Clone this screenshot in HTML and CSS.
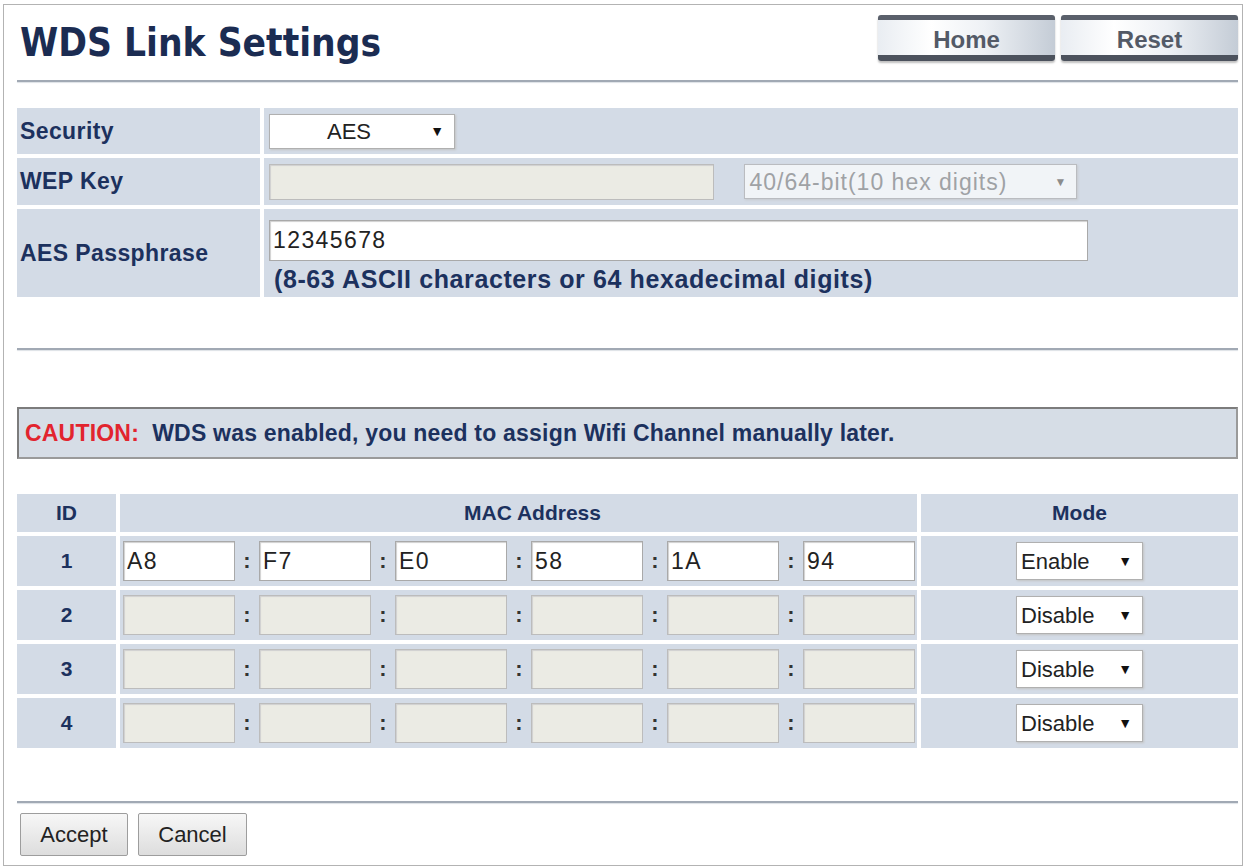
FILE: index.html
```html
<!DOCTYPE html>
<html lang="en">
    <head>
        <meta charset="UTF-8">
        <meta name="viewport" content="width=device-width, initial-scale=1.0">
        <link rel="stylesheet" href="styles.css">
        <title>WDS Link Settings</title>
    </head>
    <body>
        <div class="page">
            <div class="header">
                <h1 class="title">WDS Link Settings</h1>
                <div class="nav">
                    <a class="nav-btn" href="#">Home</a>
                    <a class="nav-btn" href="#">Reset</a>
                </div>
            </div>
            <div class="rule rule-top"></div>

            <table class="form-table security">
                <tr class="row-security">
                    <td class="label">Security</td>
                    <td class="value">
                        <span class="select-box">
                            <select class="sel sel-security"><option>AES</option></select>
                        </span>
                    </td>
                </tr>
                <tr class="row-wep">
                    <td class="label">WEP Key</td>
                    <td class="value">
                        <input class="txt txt-wep" type="text" disabled>
                        <span class="select-box select-off">
                            <select class="sel sel-keylen" disabled><option>40/64-bit(10 hex digits)</option></select>
                        </span>
                    </td>
                </tr>
                <tr class="row-aes">
                    <td class="label">AES Passphrase</td>
                    <td class="value value-aes">
                        <input class="txt txt-aes" type="text" value="12345678">
                        <div class="hint">(8-63 ASCII characters or 64 hexadecimal digits)</div>
                    </td>
                </tr>
            </table>

            <div class="rule rule-mid"></div>

            <div class="caution"><span class="caution-tag">CAUTION:</span>&nbsp; WDS was enabled, you need to assign Wifi Channel manually later.</div>

            <table class="form-table wds">
                <tr class="row-head">
                    <th class="col-id">ID</th>
                    <th class="col-mac">MAC Address</th>
                    <th class="col-mode">Mode</th>
                </tr>
                <tr class="row-mac">
                    <td class="col-id">1</td>
                    <td class="col-mac">
                        <div class="mac">
                            <input class="txt txt-mac" type="text" value="A8"><span class="sep">:</span>
                            <input class="txt txt-mac" type="text" value="F7"><span class="sep">:</span>
                            <input class="txt txt-mac" type="text" value="E0"><span class="sep">:</span>
                            <input class="txt txt-mac" type="text" value="58"><span class="sep">:</span>
                            <input class="txt txt-mac" type="text" value="1A"><span class="sep">:</span>
                            <input class="txt txt-mac" type="text" value="94">
                        </div>
                    </td>
                    <td class="col-mode">
                        <span class="select-box"><select class="sel sel-mode"><option>Enable</option></select></span>
                    </td>
                </tr>
                <tr class="row-mac">
                    <td class="col-id">2</td>
                    <td class="col-mac">
                        <div class="mac">
                            <input class="txt txt-mac" type="text" disabled><span class="sep">:</span>
                            <input class="txt txt-mac" type="text" disabled><span class="sep">:</span>
                            <input class="txt txt-mac" type="text" disabled><span class="sep">:</span>
                            <input class="txt txt-mac" type="text" disabled><span class="sep">:</span>
                            <input class="txt txt-mac" type="text" disabled><span class="sep">:</span>
                            <input class="txt txt-mac" type="text" disabled>
                        </div>
                    </td>
                    <td class="col-mode">
                        <span class="select-box"><select class="sel sel-mode"><option>Disable</option></select></span>
                    </td>
                </tr>
                <tr class="row-mac">
                    <td class="col-id">3</td>
                    <td class="col-mac">
                        <div class="mac">
                            <input class="txt txt-mac" type="text" disabled><span class="sep">:</span>
                            <input class="txt txt-mac" type="text" disabled><span class="sep">:</span>
                            <input class="txt txt-mac" type="text" disabled><span class="sep">:</span>
                            <input class="txt txt-mac" type="text" disabled><span class="sep">:</span>
                            <input class="txt txt-mac" type="text" disabled><span class="sep">:</span>
                            <input class="txt txt-mac" type="text" disabled>
                        </div>
                    </td>
                    <td class="col-mode">
                        <span class="select-box"><select class="sel sel-mode"><option>Disable</option></select></span>
                    </td>
                </tr>
                <tr class="row-mac">
                    <td class="col-id">4</td>
                    <td class="col-mac">
                        <div class="mac">
                            <input class="txt txt-mac" type="text" disabled><span class="sep">:</span>
                            <input class="txt txt-mac" type="text" disabled><span class="sep">:</span>
                            <input class="txt txt-mac" type="text" disabled><span class="sep">:</span>
                            <input class="txt txt-mac" type="text" disabled><span class="sep">:</span>
                            <input class="txt txt-mac" type="text" disabled><span class="sep">:</span>
                            <input class="txt txt-mac" type="text" disabled>
                        </div>
                    </td>
                    <td class="col-mode">
                        <span class="select-box"><select class="sel sel-mode"><option>Disable</option></select></span>
                    </td>
                </tr>
            </table>

            <div class="rule rule-bottom"></div>

            <div class="actions">
                <button class="btn btn-accept" type="button">Accept</button>
                <button class="btn btn-cancel" type="button">Cancel</button>
            </div>
        </div>
    </body>
</html>
```

FILE: styles.css
```css
body {
    margin: 0;
    background: #ffffff;
    font-family: "Liberation Sans", Arial, Helvetica, sans-serif;
}

.page {
    margin: 4px 5px 0 3px;
    border: 1px solid #b3b3b3;
    padding: 10px 4px 9px 13px;
}

/* header with title and the two tab buttons */
.header {
    display: flex;
    justify-content: space-between;
    align-items: flex-start;
}

.title {
    margin: 6px 0 0 3px;
    font-family: "DejaVu Sans Condensed", "DejaVu Sans", Verdana, sans-serif;
    font-size: 38.5px;
    line-height: 44px;
    font-weight: bold;
    color: #1b2c52;
}

.nav {
    display: flex;
    gap: 6px;
}

.nav-btn {
    display: block;
    width: 177px;
    height: 46px;
    box-sizing: border-box;
    border-top: 5px solid #5a606b;
    border-bottom: 6px solid #4c525d;
    border-radius: 3px;
    background: linear-gradient(90deg, #e9edf2 0%, #ffffff 30%, #eef1f5 60%, #c4ccd6 100%);
    box-shadow: 0 2px 2px rgba(0, 0, 0, 0.25);
    color: #535a67;
    font-size: 24px;
    font-weight: bold;
    line-height: 40px;
    text-align: center;
    text-decoration: none;
}

.rule {
    height: 2px;
    background: #a1a9b4;
    box-shadow: 0 1px 1px #dde1e6;
}

.rule-top {
    margin-top: 15px;
}

.rule-mid {
    margin-top: 47px;
}

.rule-bottom {
    margin-top: 49px;
}

/* settings tables */
.form-table {
    width: calc(100% + 8px);
    margin: 0 -4px;
    border-collapse: separate;
    border-spacing: 4px;
}

.form-table td,
.form-table th {
    background: #d3dbe6;
    padding: 0;
    color: #1c315e;
    font-weight: bold;
}

.security {
    margin-top: 22px;
}

.row-security {
    height: 46px;
}

.row-wep {
    height: 47px;
}

.row-aes {
    height: 88px;
}

.label {
    width: 240px;
    padding-left: 3px !important;
    font-size: 23px;
    letter-spacing: 0.4px;
    vertical-align: middle;
}

.value {
    padding-left: 5px !important;
    vertical-align: middle;
}

.value-aes {
    vertical-align: top;
    padding-top: 11px !important;
}

.hint {
    margin-top: 3px;
    padding-left: 5px;
    font-size: 25px;
    letter-spacing: 0.6px;
    line-height: 30px;
    font-weight: bold;
    color: #1c315e;
}

/* inputs and selects */
.txt {
    box-sizing: border-box;
    margin: 0;
    border: 1px solid #a9a9a9;
    padding: 0 3px;
    background: #ffffff;
    box-shadow: inset 1px 1px 1px #d0d0d0;
    font-family: "Liberation Sans", Arial, sans-serif;
    font-size: 23px;
    letter-spacing: 1.4px;
    color: #222222;
    vertical-align: middle;
}

.txt:disabled {
    background: #ebebe4;
    border-color: #bcbcbc;
}

.txt-wep {
    width: 445px;
    height: 36px;
}

.txt-aes {
    width: 819px;
    height: 41px;
    display: block;
}

.select-box {
    position: relative;
    display: inline-block;
    vertical-align: middle;
}

.select-box::after {
    content: "\25BC";
    position: absolute;
    right: 11px;
    top: 50%;
    transform: translateY(-50%);
    font-size: 14px;
    color: #111111;
    pointer-events: none;
}

.select-off::after {
    color: #8c8c8c;
    font-size: 12px;
}

.sel {
    -webkit-appearance: none;
    appearance: none;
    box-sizing: border-box;
    margin: 0;
    border: 1px solid #b0b0b0;
    border-radius: 0;
    padding: 0 30px 0 4px;
    background: #ffffff;
    box-shadow: 1px 1px 2px #c4c4c4;
    font-family: "Liberation Sans", Arial, sans-serif;
    font-size: 22px;
    color: #222222;
    display: block;
}

.sel-security {
    width: 186px;
    height: 35px;
    text-align-last: center;
}

.sel-keylen {
    width: 333px;
    height: 35px;
    font-size: 23px;
    letter-spacing: 1px;
    color: #8a8a8a;
}

.select-off {
    margin-left: 26px;
}

.sel-mode {
    width: 127px;
    height: 38px;
}

/* caution banner */
.caution {
    margin-top: 57px;
    height: 48px;
    border: 2px solid #858585;
    border-color: #7c7c7c #9a9a9a #9a9a9a #7c7c7c;
    padding-left: 6px;
    background: #d6dde6;
    color: #1c315e;
    font-size: 23px;
    letter-spacing: 0.2px;
    font-weight: bold;
    line-height: 48px;
}

.caution-tag {
    color: #e2242e;
}

/* WDS MAC table */
.wds {
    margin-top: 31px;
}

.row-head {
    height: 38px;
}

.row-head th {
    font-size: 21px;
    text-align: center;
    vertical-align: middle;
}

.row-head th.col-mac {
    padding-left: 28px;
}

.row-mac {
    height: 50px;
}

.col-id {
    width: 99px;
    text-align: center;
    font-size: 21px;
}

.col-mode {
    width: 317px;
    text-align: center;
}

.col-mode .select-box {
    text-align: left;
}

.mac {
    display: flex;
    align-items: center;
    padding-left: 3px;
}

.txt-mac {
    width: 112px;
    height: 40px;
}

.sep {
    width: 24px;
    text-align: center;
    font-size: 22px;
    font-weight: bold;
    color: #333333;
}

/* bottom buttons */
.actions {
    display: flex;
    gap: 10px;
    margin-top: 10px;
    padding-left: 3px;
}

.btn {
    height: 43px;
    border: 1px solid #9d9d9d;
    border-radius: 2px;
    background: linear-gradient(#f7f7f7, #dddddd);
    font-family: "Liberation Sans", Arial, sans-serif;
    font-size: 22px;
    color: #222222;
}

.btn-accept {
    width: 108px;
}

.btn-cancel {
    width: 109px;
}
```
